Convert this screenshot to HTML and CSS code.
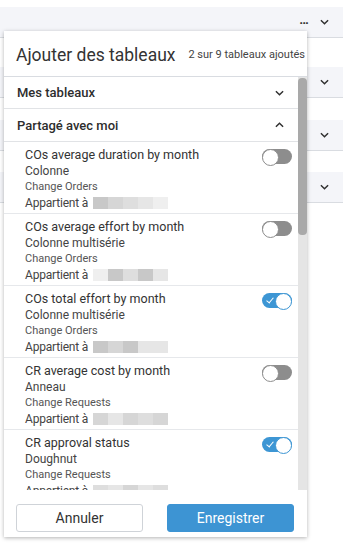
FILE: index.html
```html
<!DOCTYPE html>
<html lang="fr">
<head>
  <meta charset="UTF-8" />
  <meta name="viewport" content="width=device-width, initial-scale=1.0"/>
  <title>Ajouter des tableaux</title>
  <link rel="stylesheet" href="styles.css">
</head>
<body>

  <!-- Page behind the dialog -->
  <div class="page">
    <div class="bg-row first">
      <span class="dots">&middot;&middot;&middot;</span>
      <svg class="chev" viewBox="0 0 10 6"><path d="M1 1l4 4 4-4"/></svg>
    </div>
    <div class="bg-row r2"><svg class="chev" viewBox="0 0 10 6"><path d="M1 1l4 4 4-4"/></svg></div>
    <div class="bg-row r3"><svg class="chev" viewBox="0 0 10 6"><path d="M1 1l4 4 4-4"/></svg></div>
    <div class="bg-row r4"><svg class="chev" viewBox="0 0 10 6"><path d="M1 1l4 4 4-4"/></svg></div>
  </div>

  <!-- Dialog -->
  <div class="modal">
    <div class="modal-head">
      <h2>Ajouter des tableaux</h2>
      <span class="count">2 sur 9 tableaux ajoutés</span>
    </div>

    <div class="modal-body">
      <div class="list">
        <div class="section-head">
          <span>Mes tableaux</span>
          <svg class="chev" viewBox="0 0 10 6"><path d="M1 1l4 4 4-4"/></svg>
        </div>
        <div class="section-head">
          <span>Partagé avec moi</span>
          <svg class="chev" viewBox="0 0 10 6"><path d="M1 5l4-4 4 4"/></svg>
        </div>

        <ul class="chart-list">
          <li class="chart">
            <div class="info">
              <div class="name">COs average duration by month</div>
              <div class="type">Colonne</div>
              <div class="module">Change Orders</div>
              <div class="owner">Appartient à <span class="redact"><i class="s1"></i><i class="s2"></i><i class="s3"></i><i class="s4"></i><i class="s5"></i></span></div>
            </div>
            <span class="toggle"></span>
          </li>
          <li class="chart">
            <div class="info">
              <div class="name">COs average effort by month</div>
              <div class="type">Colonne multisérie</div>
              <div class="module">Change Orders</div>
              <div class="owner">Appartient à <span class="redact"><i class="s5"></i><i class="s1"></i><i class="s3"></i><i class="s1"></i><i class="s4"></i></span></div>
            </div>
            <span class="toggle"></span>
          </li>
          <li class="chart">
            <div class="info">
              <div class="name">COs total effort by month</div>
              <div class="type">Colonne multisérie</div>
              <div class="module">Change Orders</div>
              <div class="owner">Appartient à <span class="redact"><i class="s1"></i><i class="s2"></i><i class="s1"></i><i class="s4"></i><i class="s4"></i></span></div>
            </div>
            <span class="toggle on"></span>
          </li>
          <li class="chart">
            <div class="info">
              <div class="name">CR average cost by month</div>
              <div class="type">Anneau</div>
              <div class="module">Change Requests</div>
              <div class="owner">Appartient à <span class="redact"><i class="s2"></i><i class="s4"></i><i class="s2"></i><i class="s3"></i><i class="s2"></i></span></div>
            </div>
            <span class="toggle"></span>
          </li>
          <li class="chart">
            <div class="info">
              <div class="name">CR approval status</div>
              <div class="type">Doughnut</div>
              <div class="module">Change Requests</div>
              <div class="owner">Appartient à <span class="redact"><i class="s3"></i><i class="s4"></i><i class="s2"></i><i class="s4"></i><i class="s3"></i></span></div>
            </div>
            <span class="toggle on"></span>
          </li>
        </ul>
      </div>

      <!-- Scrollbar -->
      <div class="scrollbar"><div class="thumb"></div></div>
    </div>

    <div class="modal-foot">
      <button class="btn">Annuler</button>
      <button class="btn primary">Enregistrer</button>
    </div>
  </div>

</body>
</html>
```

FILE: styles.css
```css
/* Basic Reset */
* {
  margin: 0;
  padding: 0;
  box-sizing: border-box;
}

body {
  background: #fff;
  color: #3c3c3c;
  font-family: Roboto, "Noto Sans", sans-serif;
  height: 100vh;
  overflow: hidden;
}

/* Page behind the dialog */
.page {
  padding-top: 7px;
  width: 343px;
}

.bg-row {
  height: 31px;
  background: #f4f5f9;
  border-bottom: 1px solid #d9dce1;
  display: flex;
  align-items: center;
  justify-content: flex-end;
  padding-right: 14px;
}

.bg-row.r2 { margin-top: 29px; }
.bg-row.r3 { margin-top: 22px; }
.bg-row.r4 { margin-top: 21px; }

.dots {
  font-size: 13px;
  font-weight: bold;
  color: #333;
  margin-right: 12px;
  letter-spacing: -1px;
}

.chev {
  width: 9px;
  height: 6px;
  fill: none;
  stroke: #2f2f2f;
  stroke-width: 1.6;
}

/* Dialog */
.modal {
  position: absolute;
  left: 4px;
  top: 31px;
  width: 303px;
  height: 506px;
  background: #fff;
  box-shadow: 0 1px 4px rgba(0, 0, 0, 0.3);
  display: flex;
  flex-direction: column;
}

.modal-head {
  height: 46px;
  display: flex;
  align-items: center;
  justify-content: space-between;
  padding: 2px 2px 0 12px;
  border-bottom: 1px solid #d9dce1;
}

.modal-head h2 {
  font-size: 17.5px;
  font-weight: normal;
  color: #333;
}

.count {
  font-size: 11px;
  color: #444;
}

.modal-body {
  flex: 1;
  display: flex;
  min-height: 0;
}

.list {
  flex: 1;
  overflow: hidden;
}

.scrollbar {
  width: 9px;
  background: #e5e5e5;
  padding-top: 1px;
}

.thumb {
  height: 157px;
  background: #a9a9a9;
  border-radius: 4px;
}

.section-head {
  height: 32px;
  display: flex;
  align-items: center;
  justify-content: space-between;
  padding: 0 14px 0 13px;
  border-bottom: 1px solid #e1e3e6;
  font-size: 13px;
  font-weight: 500;
  color: #2d2d2d;
}

.section-head + .section-head {
  height: 33px;
}

/* Chart list */
.chart-list {
  list-style: none;
}

.chart {
  height: 72px;
  display: flex;
  justify-content: space-between;
  padding: 5px 6px 0 21px;
  border-bottom: 1px solid #e6e8eb;
}

.info {
  line-height: 16px;
  font-size: 12px;
  color: #444;
}

.name {
  font-size: 12.5px;
  color: #333;
}

.module {
  font-size: 11px;
  color: #555;
}

.owner {
  letter-spacing: -0.2px;
}

.redact {
  display: inline-flex;
  vertical-align: -2px;
  margin-left: 2px;
}

.redact i {
  width: 15px;
  height: 12px;
}

.s1 { background: #c8c8c8; }
.s2 { background: #d6d6d6; }
.s3 { background: #dedede; }
.s4 { background: #e6e6e6; }
.s5 { background: #efefef; }

/* Toggle switch */
.toggle {
  position: relative;
  width: 30px;
  height: 15px;
  margin-top: 2px;
  border-radius: 8px;
  background: #8d8d8d;
  flex-shrink: 0;
}

.toggle::after {
  content: "";
  position: absolute;
  left: 0;
  top: 0;
  width: 15px;
  height: 15px;
  border-radius: 50%;
  background: #fff;
  border: 1px solid #8d8d8d;
}

.toggle.on {
  background: #3d96d4;
}

.toggle.on::after {
  left: auto;
  right: 0;
  border-color: #3d96d4;
}

.toggle.on::before {
  content: "";
  position: absolute;
  left: 6px;
  top: 3px;
  width: 3px;
  height: 6px;
  border: solid #fff;
  border-width: 0 1.5px 1.5px 0;
  transform: rotate(40deg);
}

/* Footer */
.modal-foot {
  height: 47px;
  display: flex;
  justify-content: space-between;
  padding: 14px 13px 5px 12px;
}

.btn {
  width: 127px;
  height: 28px;
  border: 1px solid #cfd3d8;
  border-radius: 3px;
  background: #fff;
  color: #333;
  font-family: Roboto, "Noto Sans", sans-serif;
  font-size: 14px;
  cursor: pointer;
}

.btn.primary {
  background: #3d94d3;
  border-color: #3d94d3;
  color: #fff;
}
```
